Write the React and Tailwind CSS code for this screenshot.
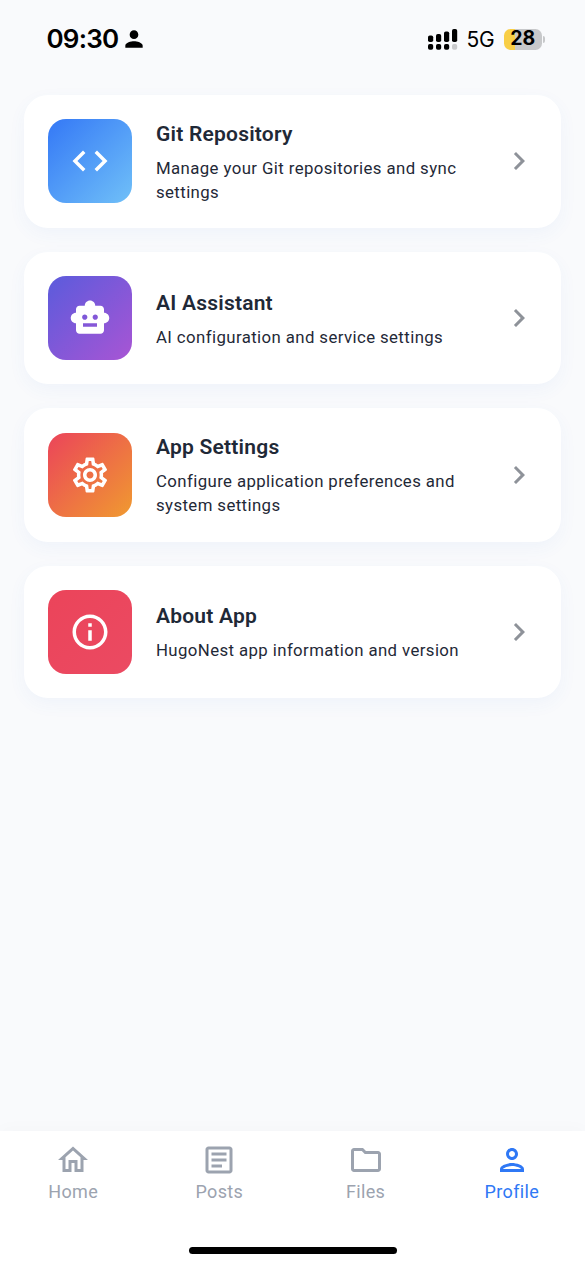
import {
  MdChevronRight,
  MdCode,
  MdInfoOutline,
  MdOutlineArticle,
  MdOutlineFolder,
  MdOutlineHome,
  MdOutlinePerson,
  MdOutlineSettings,
  MdPerson,
  MdSmartToy,
} from "react-icons/md";

const items = [
  { title: "Git Repository", text: "Manage your Git repositories and sync settings", Icon: MdCode, tile: "from-[#3478f6] to-[#70c0f8]", size: "h-[133.5px]" },
  { title: "AI Assistant", text: "AI configuration and service settings", Icon: MdSmartToy, tile: "from-[#5b5bdc] to-[#a855d4]", size: "h-[132px]" },
  { title: "App Settings", text: "Configure application preferences and system settings", Icon: MdOutlineSettings, tile: "from-[#eb445a] to-[#f09a30]", size: "h-[133.5px]" },
  { title: "About App", text: "HugoNest app information and version", Icon: MdInfoOutline, tile: "from-[#eb445a] to-[#eb4a62]", size: "h-[132px]" },
];

const tabs = [
  { label: "Home", Icon: MdOutlineHome, color: "text-[#9ca3af]" },
  { label: "Posts", Icon: MdOutlineArticle, color: "text-[#9ca3af]" },
  { label: "Files", Icon: MdOutlineFolder, color: "text-[#9ca3af]" },
  { label: "Profile", Icon: MdOutlinePerson, color: "text-[#2f78f5]" },
];

const bars = [
  { x: 0, y: 6.5, h: 6.5 },
  { x: 8, y: 5, h: 8 },
  { x: 16, y: 2.5, h: 10.5 },
  { x: 24, y: 0, h: 13 },
];

function StatusBar() {
  return (
    <header className="flex h-[94.5px] items-start justify-between pt-[23.5px] pr-[40px] pl-[46.5px] font-['Inter',sans-serif] text-black">
      <div className="flex h-[31px] items-center">
        <span className="text-[26px] leading-none font-semibold tracking-[-0.8px]">09:30</span>
        <MdPerson className="ml-[2.5px] size-[26px]" />
      </div>
      <div className="flex h-[31px] items-center">
        <svg className="h-[21px] w-[30px]" viewBox="0 0 30 21">
          {bars.map((b, i) => (
            <g key={b.x}>
              <rect x={b.x} y={b.y} width="5.2" height={b.h} rx="1.8" />
              <rect x={b.x} y="15" width="5.2" height="5.8" rx="1.8" fill={i === 3 ? "#c9cacc" : "#000"} />
            </g>
          ))}
        </svg>
        <span className="ml-[8.5px] pt-px text-[21px] leading-none tracking-[-0.2px]">5G</span>
        <div className="ml-[9.5px] flex h-[21px] w-[37.5px] items-center justify-center rounded-[6.5px] bg-linear-to-r from-[#f8ce46] from-[29%] to-[#c7c8ca] to-[29%] text-[19.5px] leading-none font-bold">
          28
        </div>
        <div className="ml-[1px] h-[7px] w-[2.5px] rounded-r-full bg-[#c7c8ca]" />
      </div>
    </header>
  );
}

function SettingsCard({ title, text, Icon, tile, size }) {
  return (
    <button className={`flex ${size} w-full items-center rounded-3xl bg-white px-6 text-left shadow-[0_6px_18px_rgba(60,120,210,0.05)]`}>
      <span className={`flex size-[84px] shrink-0 items-center justify-center rounded-[18px] bg-linear-to-br/srgb ${tile} text-white`}>
        <Icon className="size-[42px]" />
      </span>
      <span className="ml-6 flex min-w-0 flex-1 flex-col gap-[6px] text-[#1f2937]">
        <span className="text-[21px] leading-[30px] font-semibold tracking-[0.22px]">{title}</span>
        <span className="pt-[1px] text-[16.8px] leading-[24px] tracking-[0.4px]">{text}</span>
      </span>
      <MdChevronRight className="size-9 shrink-0 text-[#8e9299]" />
    </button>
  );
}

export default function App() {
  return (
    <div className="flex h-[1266px] w-[585px] flex-col overflow-hidden bg-[#f9fafc] font-['Roboto',sans-serif]">
      <StatusBar />
      <main className="flex flex-1 flex-col gap-6 px-6">
        {items.map((item) => (
          <SettingsCard key={item.title} {...item} />
        ))}
      </main>
      <footer className="flex h-[135px] shrink-0 flex-col items-center justify-between bg-white pb-3 shadow-[0_-3px_15px_rgba(0,0,0,0.02)]">
        <nav className="grid w-full grid-cols-4 pt-[11.4px]">
          {tabs.map(({ label, Icon, color }) => (
            <button key={label} className={`flex flex-col items-center ${color}`}>
              <Icon className="size-9" />
              <span className="pt-px text-[18px] leading-[26px] tracking-[0.35px]">{label}</span>
            </button>
          ))}
        </nav>
        <div className="h-[7.5px] w-[208px] rounded-full bg-black" />
      </footer>
    </div>
  );
}
